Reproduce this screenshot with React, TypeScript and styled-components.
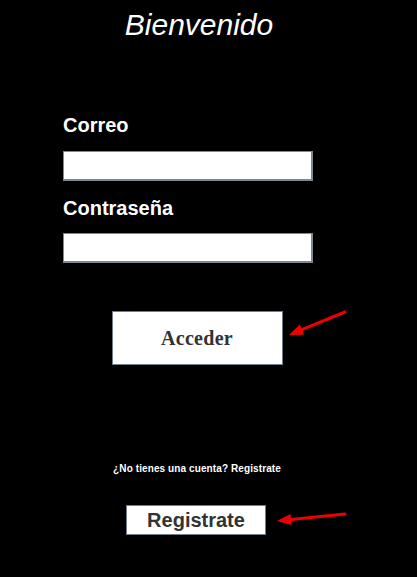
import React from "react";
import styled, { createGlobalStyle } from "styled-components";

const Global = createGlobalStyle`
  html, body {
    margin: 0;
    padding: 0;
    background: #000;
  }
  body {
    font-family: "Liberation Sans", Arial, sans-serif;
    min-height: 577px;
  }
`;

const Page = styled.div`
  position: relative;
  width: 394px;
  height: 577px;
  display: flex;
  flex-direction: column;
  align-items: center;
`;

const Title = styled.h1`
  margin: 10px 0 0 0;
  font-size: 30px;
  line-height: 30px;
  font-style: italic;
  font-weight: normal;
  color: #fff;
  transform: translateX(2px);
`;

const Form = styled.form`
  align-self: flex-start;
  margin: 75px 0 0 63px;
  display: flex;
  flex-direction: column;
`;

const Label = styled.label<{ $top: number }>`
  margin-top: ${(p) => p.$top}px;
  font-size: 20px;
  line-height: 20px;
  font-weight: bold;
  color: #fff;
`;

const Input = styled.input<{ $top: number }>`
  box-sizing: border-box;
  margin: ${(p) => p.$top}px 0 0 0;
  width: 250px;
  height: 30px;
  background: #fff;
  border-style: solid;
  border-color: #7d8894;
  border-width: 1px 2px 2px 1px;
  padding: 0 4px;
  outline: none;
`;

const PrimaryButton = styled.button`
  box-sizing: border-box;
  margin-top: 48px;
  width: 171px;
  height: 54px;
  background: #fff;
  border: 1px solid #6f7d8c;
  font-family: "Liberation Serif", "Times New Roman", serif;
  font-weight: bold;
  font-size: 20px;
  letter-spacing: 0.3px;
  color: #333;
  padding: 0;
`;

const Hint = styled.p`
  margin: 98px 0 0 0;
  font-size: 10px;
  line-height: 12px;
  font-weight: bold;
  letter-spacing: 0.1px;
  color: #fff;
`;

const SecondaryButton = styled.button`
  box-sizing: border-box;
  margin-top: 30px;
  width: 140px;
  height: 30px;
  background: #fff;
  border: 1px solid #6f7d8c;
  font-family: "Liberation Sans", Arial, sans-serif;
  font-weight: bold;
  font-size: 20px;
  line-height: 28px;
  color: #333;
  padding: 0;
  transform: translateX(-1px);
`;

const Arrow = styled.svg<{ $left: number; $top: number }>`
  position: absolute;
  left: ${(p) => p.$left}px;
  top: ${(p) => p.$top}px;
  overflow: visible;
`;

function RedArrow({
  x1,
  y1,
  x2,
  y2,
}: {
  x1: number;
  y1: number;
  x2: number;
  y2: number;
}) {
  const dx = x2 - x1;
  const dy = y2 - y1;
  const len = Math.hypot(dx, dy);
  const ux = dx / len;
  const uy = dy / len;
  const head = 14;
  const half = 5.5;
  const bx = x2 - ux * head;
  const by = y2 - uy * head;
  const px = -uy;
  const py = ux;
  const pts = `${x2},${y2} ${bx + px * half},${by + py * half} ${bx - px * half},${by - py * half}`;
  return (
    <Arrow $left={0} $top={0} width={1} height={1}>
      <line x1={x1} y1={y1} x2={bx + ux * 2} y2={by + uy * 2} stroke="#ee0000" strokeWidth={3} strokeLinecap="round" />
      <polygon points={pts} fill="#ee0000" />
    </Arrow>
  );
}

export default function App() {
  return (
    <>
      <Global />
      <Page>
        <Title>Bienvenido</Title>
        <Form onSubmit={(e) => e.preventDefault()}>
          <Label $top={0}>Correo</Label>
          <Input $top={16} type="email" />
          <Label $top={17}>Contraseña</Label>
          <Input $top={15} type="password" />
        </Form>
        <PrimaryButton type="button">Acceder</PrimaryButton>
        <Hint>¿No tienes una cuenta? Registrate</Hint>
        <SecondaryButton type="button">Registrate</SecondaryButton>
        <RedArrow x1={345} y1={312} x2={289} y2={335} />
        <RedArrow x1={345} y1={514} x2={277} y2={521} />
      </Page>
    </>
  );
}
